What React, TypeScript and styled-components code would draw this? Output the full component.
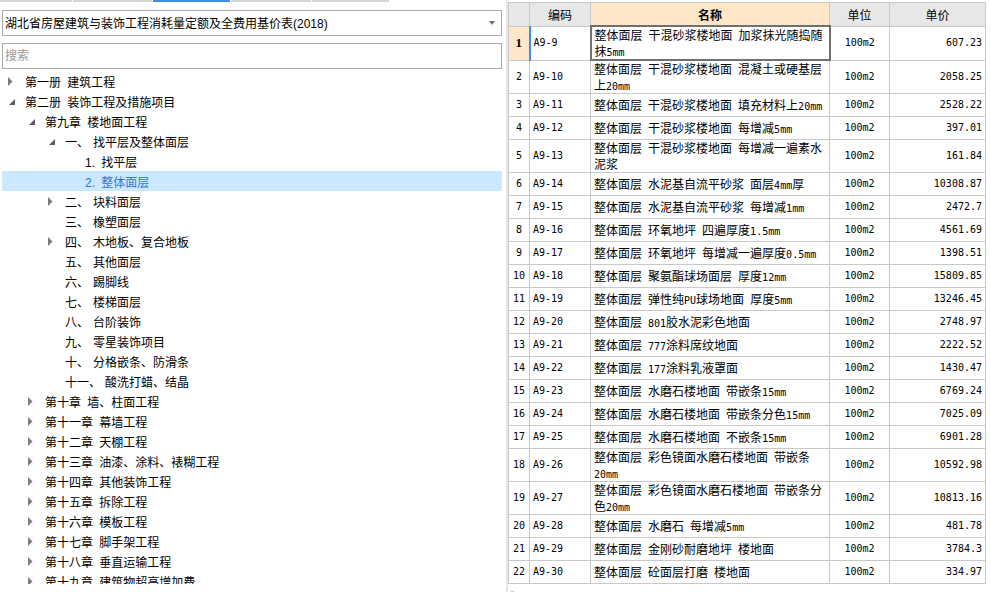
import styled, { createGlobalStyle } from 'styled-components'

const GlobalStyle = createGlobalStyle`
  html, body {
    margin: 0;
    padding: 0;
    background: #fff;
    overflow: hidden;
  }
  body {
    font-family: "Liberation Sans", "Noto Sans CJK SC", sans-serif;
    font-size: 12px;
    color: #000;
  }
`

type TreeItem = {
  level: number
  label: string
  prefix?: string
  arrow?: 'open' | 'closed'
  selected?: boolean
}

const tree: TreeItem[] = [
  { level: 0, arrow: 'closed', label: '第一册 建筑工程' },
  { level: 0, arrow: 'open', label: '第二册 装饰工程及措施项目' },
  { level: 1, arrow: 'open', label: '第九章 楼地面工程' },
  { level: 2, arrow: 'open', prefix: '一、', label: '找平层及整体面层' },
  { level: 3, label: '1. 找平层' },
  { level: 3, label: '2. 整体面层', selected: true },
  { level: 2, arrow: 'closed', prefix: '二、', label: '块料面层' },
  { level: 2, prefix: '三、', label: '橡塑面层' },
  { level: 2, arrow: 'closed', prefix: '四、', label: '木地板、复合地板' },
  { level: 2, prefix: '五、', label: '其他面层' },
  { level: 2, prefix: '六、', label: '踢脚线' },
  { level: 2, prefix: '七、', label: '楼梯面层' },
  { level: 2, prefix: '八、', label: '台阶装饰' },
  { level: 2, prefix: '九、', label: '零星装饰项目' },
  { level: 2, prefix: '十、', label: '分格嵌条、防滑条' },
  { level: 2, prefix: '十一、', label: '酸洗打蜡、结晶' },
  { level: 1, arrow: 'closed', label: '第十章 墙、柱面工程' },
  { level: 1, arrow: 'closed', label: '第十一章 幕墙工程' },
  { level: 1, arrow: 'closed', label: '第十二章 天棚工程' },
  { level: 1, arrow: 'closed', label: '第十三章 油漆、涂料、裱糊工程' },
  { level: 1, arrow: 'closed', label: '第十四章 其他装饰工程' },
  { level: 1, arrow: 'closed', label: '第十五章 拆除工程' },
  { level: 1, arrow: 'closed', label: '第十六章 模板工程' },
  { level: 1, arrow: 'closed', label: '第十七章 脚手架工程' },
  { level: 1, arrow: 'closed', label: '第十八章 垂直运输工程' },
  { level: 1, arrow: 'closed', label: '第十九章 建筑物超高增加费' },
]

type Quota = { code: string; name: string[]; unit: string; price: string }

const rows: Quota[] = [
  { code: 'A9-9', name: ['整体面层 干混砂浆楼地面 加浆抹光随捣随', '抹5mm'], unit: '100m2', price: '607.23' },
  { code: 'A9-10', name: ['整体面层 干混砂浆楼地面 混凝土或硬基层', '上20mm'], unit: '100m2', price: '2058.25' },
  { code: 'A9-11', name: ['整体面层 干混砂浆楼地面 填充材料上20mm'], unit: '100m2', price: '2528.22' },
  { code: 'A9-12', name: ['整体面层 干混砂浆楼地面 每增减5mm'], unit: '100m2', price: '397.01' },
  { code: 'A9-13', name: ['整体面层 干混砂浆楼地面 每增减一遍素水', '泥浆'], unit: '100m2', price: '161.84' },
  { code: 'A9-14', name: ['整体面层 水泥基自流平砂浆 面层4mm厚'], unit: '100m2', price: '10308.87' },
  { code: 'A9-15', name: ['整体面层 水泥基自流平砂浆 每增减1mm'], unit: '100m2', price: '2472.7' },
  { code: 'A9-16', name: ['整体面层 环氧地坪 四遍厚度1.5mm'], unit: '100m2', price: '4561.69' },
  { code: 'A9-17', name: ['整体面层 环氧地坪 每增减一遍厚度0.5mm'], unit: '100m2', price: '1398.51' },
  { code: 'A9-18', name: ['整体面层 聚氨酯球场面层 厚度12mm'], unit: '100m2', price: '15809.85' },
  { code: 'A9-19', name: ['整体面层 弹性纯PU球场地面 厚度5mm'], unit: '100m2', price: '13246.45' },
  { code: 'A9-20', name: ['整体面层 801胶水泥彩色地面'], unit: '100m2', price: '2748.97' },
  { code: 'A9-21', name: ['整体面层 777涂料席纹地面'], unit: '100m2', price: '2222.52' },
  { code: 'A9-22', name: ['整体面层 177涂料乳液罩面'], unit: '100m2', price: '1430.47' },
  { code: 'A9-23', name: ['整体面层 水磨石楼地面 带嵌条15mm'], unit: '100m2', price: '6769.24' },
  { code: 'A9-24', name: ['整体面层 水磨石楼地面 带嵌条分色15mm'], unit: '100m2', price: '7025.09' },
  { code: 'A9-25', name: ['整体面层 水磨石楼地面 不嵌条15mm'], unit: '100m2', price: '6901.28' },
  { code: 'A9-26', name: ['整体面层 彩色镜面水磨石楼地面 带嵌条', '20mm'], unit: '100m2', price: '10592.98' },
  { code: 'A9-27', name: ['整体面层 彩色镜面水磨石楼地面 带嵌条分', '色20mm'], unit: '100m2', price: '10813.16' },
  { code: 'A9-28', name: ['整体面层 水磨石 每增减5mm'], unit: '100m2', price: '481.78' },
  { code: 'A9-29', name: ['整体面层 金刚砂耐磨地坪 楼地面'], unit: '100m2', price: '3784.3' },
  { code: 'A9-30', name: ['整体面层 砼面层打磨 楼地面'], unit: '100m2', price: '334.97' },
]

const tabs = [
  { width: 72, active: false },
  { width: 79, active: false },
  { width: 77, active: true },
  { width: 80, active: false },
  { width: 77, active: false },
]

// split ascii runs so they can be drawn half-width like the original bitmap font
const renderMixed = (text: string) =>
  text.split(/([\x20-\x7e]+)/).filter(Boolean).map((part, i) =>
    /^[\x20-\x7e]+$/.test(part) ? <Ascii key={i}>{part}</Ascii> : <span key={i}>{part}</span>
  )

const ClosedArrow = () => (
  <svg width="5" height="9" viewBox="0 0 5 9">
    <polygon points="0,0 4.5,4.5 0,9" fill="#7c7c7c" />
  </svg>
)

const OpenArrow = () => (
  <svg width="6" height="6" viewBox="0 0 6 6">
    <polygon points="6,0 6,6 0,6" fill="#5c5c5c" />
  </svg>
)

export default function App() {
  return (
    <Root>
      <GlobalStyle />
      <LeftPanel>
        <TabStrip>
          {tabs.map((t, i) => (
            <TabEdge key={i} $width={t.width} $active={t.active} />
          ))}
        </TabStrip>
        <Select>
          <SelectText>湖北省房屋建筑与装饰工程消耗量定额及全费用基价表(2018)</SelectText>
          <SelectCaret />
        </Select>
        <Search placeholder="搜索" />
        <Tree>
          {tree.map((item, i) => (
            <TreeRow key={i} $level={item.level} $selected={item.selected}>
              <Toggle $open={item.arrow === 'open'}>
                {item.arrow === 'closed' && <ClosedArrow />}
                {item.arrow === 'open' && <OpenArrow />}
              </Toggle>
              {item.prefix && <Prefix>{item.prefix}</Prefix>}
              <span>{item.label}</span>
            </TreeRow>
          ))}
        </Tree>
      </LeftPanel>
      <Splitter />
      <RightPanel>
        <Grid>
          <colgroup>
            <col style={{ width: 21 }} />
            <col style={{ width: 61 }} />
            <col style={{ width: 239 }} />
            <col style={{ width: 60 }} />
            <col style={{ width: 96 }} />
          </colgroup>
          <thead>
            <tr>
              <HeadCell />
              <HeadCell>编码</HeadCell>
              <HeadCell $accent>名称</HeadCell>
              <HeadCell>单位</HeadCell>
              <HeadCell>单价</HeadCell>
            </tr>
          </thead>
          <tbody>
            {rows.map((r, i) => {
              const current = i === 0
              return (
                <Row key={r.code} $tall={r.name.length > 1}>
                  <IndexCell $current={current}>{i + 1}</IndexCell>
                  <CodeCell $current={current}>{r.code}</CodeCell>
                  <NameCell $current={current}>
                    {r.name.map((line, j) => (
                      <NameLine key={j}>{renderMixed(line)}</NameLine>
                    ))}
                  </NameCell>
                  <UnitCell>{r.unit}</UnitCell>
                  <PriceCell>{r.price}</PriceCell>
                </Row>
              )
            })}
          </tbody>
        </Grid>
        <GripDot />
      </RightPanel>
    </Root>
  )
}

const Root = styled.div`
  display: flex;
  width: 990px;
  height: 592px;
  overflow: hidden;
`

const LeftPanel = styled.div`
  width: 506px;
  flex: none;
  box-sizing: border-box;
  padding: 0 4px 0 2px;
  display: flex;
  flex-direction: column;
`

const TabStrip = styled.div`
  display: flex;
  gap: 1px;
  height: 2px;
  margin-left: -2px;
`

const TabEdge = styled.div<{ $width: number; $active: boolean }>`
  width: ${({ $width }) => $width}px;
  height: 2px;
  background: ${({ $active }) => ($active ? '#3d8fe8' : '#d6d6d6')};
`

const Select = styled.div`
  margin-top: 8px;
  height: 26px;
  box-sizing: border-box;
  border: 1px solid #ababab;
  display: flex;
  align-items: center;
  justify-content: space-between;
  padding: 0 6px 1px 2px;
`

const SelectText = styled.span`
  font-size: 12px;
  color: #000;
  white-space: nowrap;
`

const SelectCaret = styled.span`
  width: 0;
  height: 0;
  border-left: 3.5px solid transparent;
  border-right: 3.5px solid transparent;
  border-top: 4px solid #707070;
`

const Search = styled.input`
  margin-top: 7px;
  height: 26px;
  box-sizing: border-box;
  border: 1px solid #ababab;
  padding: 0 2px;
  font-family: "Liberation Sans", "Noto Sans CJK SC", sans-serif;
  font-size: 12px;
  outline: none;
  &::placeholder {
    color: #9a9a9a;
  }
`

const Tree = styled.div`
  margin-top: 2px;
  height: 513px;
  overflow: hidden;
`

const TreeRow = styled.div<{ $level: number; $selected?: boolean }>`
  display: flex;
  align-items: center;
  height: 20px;
  padding-left: ${({ $level }) => 2 + $level * 20}px;
  background: ${({ $selected }) => ($selected ? '#cce8ff' : 'transparent')};
  color: ${({ $selected }) => ($selected ? '#2a78d6' : '#000')};
  font-size: 12px;
  word-spacing: 3px;
  white-space: nowrap;
`

const Toggle = styled.span<{ $open: boolean }>`
  width: 21px;
  flex: none;
  display: flex;
  align-items: center;
  box-sizing: border-box;
  padding-left: ${({ $open }) => ($open ? 5 : 4)}px;
  padding-top: ${({ $open }) => ($open ? 1 : 0)}px;
`

const Prefix = styled.span`
  margin-right: 4px;
`

const Splitter = styled.div`
  width: 2px;
  flex: none;
  background: #e6e6e6;
`

const RightPanel = styled.div`
  flex: 1;
  padding-top: 2px;
  display: flex;
  flex-direction: column;
`

const Grid = styled.table`
  width: 478px;
  table-layout: fixed;
  border-collapse: collapse;
  border-left: 1px solid #bdbdbd;
`

const HeadCell = styled.th<{ $accent?: boolean }>`
  height: 22px;
  padding: 0;
  border: 1px solid #c9c9c9;
  background: ${({ $accent }) => ($accent ? '#fee6c8' : '#e7e7e7')};
  font-family: "Liberation Sans", "Noto Sans CJK SC", sans-serif;
  font-size: 12px;
  font-weight: ${({ $accent }) => ($accent ? 700 : 400)};
  text-align: center;
  vertical-align: middle;
`

const Row = styled.tr<{ $tall: boolean }>`
  height: ${({ $tall }) => ($tall ? 33 : 23)}px;
`

const BodyCell = styled.td`
  border: 1px solid #c9c9c9;
  padding: 0 3px;
  vertical-align: middle;
  white-space: nowrap;
  overflow: hidden;
  line-height: 16px;
  font-family: "DejaVu Sans Mono", monospace;
  font-size: 10px;
`

const IndexCell = styled(BodyCell)<{ $current: boolean }>`
  padding: 0;
  text-align: center;
  background: ${({ $current }) => ($current ? '#fee6c8' : '#fff')};
  ${({ $current }) =>
    $current &&
    `
    font-family: "Liberation Serif", serif;
    font-weight: 700;
    font-size: 13px;
  `}
`

const CodeCell = styled(BodyCell)<{ $current: boolean }>`
  border-left: ${({ $current }) => ($current ? '2px solid #3d8ff0' : '1px solid #c9c9c9')};
`

const NameCell = styled(BodyCell)<{ $current: boolean }>`
  font-family: "Noto Sans CJK SC", sans-serif;
  font-size: 12px;
  word-spacing: 2px;
  border: ${({ $current }) => ($current ? '2px solid #707070' : '1px solid #c9c9c9')};
`

const NameLine = styled.div`
  height: 16px;
  white-space: nowrap;
`

const Ascii = styled.span`
  font-family: "DejaVu Sans Mono", monospace;
  font-size: 10px;
  word-spacing: 0;
  color: #000;
`

const UnitCell = styled(BodyCell)`
  text-align: center;
`

const PriceCell = styled(BodyCell)`
  text-align: right;
`

const GripDot = styled.div`
  width: 3px;
  height: 3px;
  margin: 7px 0 0 3px;
  background: #c4c4c4;
`
